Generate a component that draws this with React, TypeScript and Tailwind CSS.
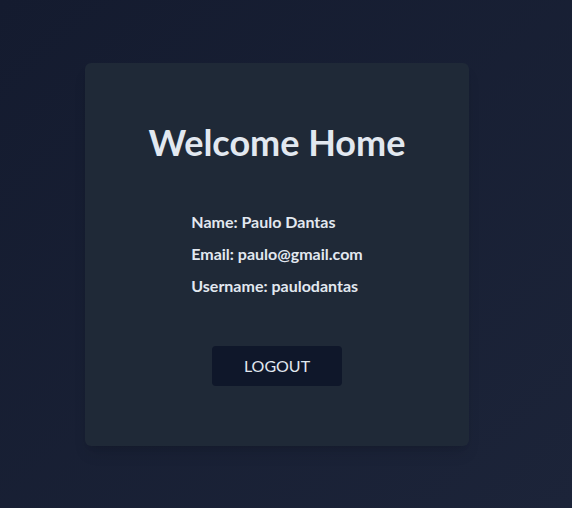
export default function App() {
  return (
    <div
      className="flex h-[508px] w-full items-center bg-gradient-to-br from-[#141b2f] to-[#1c2439] pl-[85px]"
      style={{ fontFamily: "Lato, 'Open Sans', sans-serif" }}
    >
      <div className="flex h-[383px] w-96 flex-col items-center rounded-md bg-[#1f2937] pt-[59px] shadow-lg">
        <h1 className="text-4xl leading-10 font-bold text-[#e2e8f0]">Welcome Home</h1>
        <div className="mt-[44px] flex flex-col text-base leading-8 font-bold text-[#e2e8f0]">
          <p>Name: Paulo Dantas</p>
          <p>Email: paulo@gmail.com</p>
          <p>Username: paulodantas</p>
        </div>
        <button className="mt-[44px] h-[40px] w-[130px] rounded bg-[#0f172a] text-base text-[#e2e8f0]">
          LOGOUT
        </button>
      </div>
    </div>
  );
}
